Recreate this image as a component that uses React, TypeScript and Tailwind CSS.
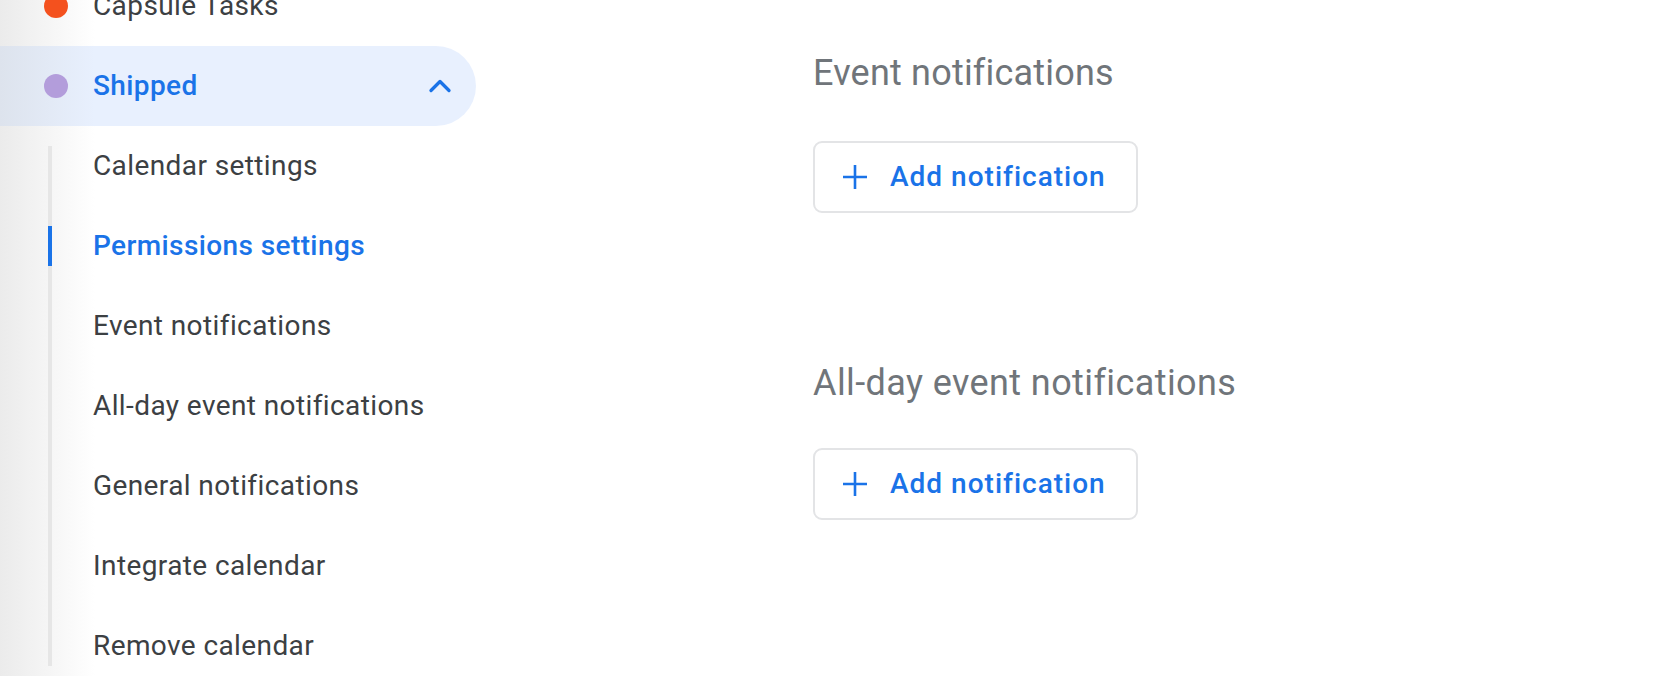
import { ChevronUp } from 'lucide-react';

const subItems = [
  'Calendar settings',
  'Permissions settings',
  'Event notifications',
  'All-day event notifications',
  'General notifications',
  'Integrate calendar',
  'Remove calendar',
];

function PlusIcon() {
  return (
    <svg className="h-6 w-6" viewBox="0 0 24 24" fill="none" stroke="currentColor" strokeWidth="2.6" aria-hidden="true">
      <path d="M12 0v24M0 12h24" />
    </svg>
  );
}

function AddButton() {
  return (
    <button className="flex h-[72px] w-[325px] items-center rounded-[9px] border-2 border-[#e3e4e6] bg-white pl-[28px] text-[28px] font-medium tracking-[1px] text-[#1a73e8]">
      <PlusIcon />
      <span className="ml-[23px]">Add notification</span>
    </button>
  );
}

export default function App() {
  return (
    <div className="flex h-[676px] w-[1672px] overflow-hidden bg-[linear-gradient(to_right,#ebebeb,#ffffff_95px)] font-['Roboto',sans-serif]">
      <aside className="-mt-[34px] w-[476px] shrink-0">
        <div className="flex h-20 items-center pl-11">
          <span className="h-6 w-6 rounded-full bg-[#f4511e]" />
          <span className="ml-[25px] text-[28px] tracking-[0.4px] text-[#3c4043]">Capsule Tasks</span>
        </div>
        <div className="flex h-20 items-center rounded-r-full bg-[linear-gradient(to_right,#dde3ed,#e8f0fe_95px)] pl-11 pr-[18px]">
          <span className="h-6 w-6 rounded-full bg-[#b39ddb]" />
          <span className="ml-[25px] flex-1 text-[28px] font-medium tracking-[0.4px] text-[#1a73e8]">Shipped</span>
          <ChevronUp className="h-9 w-9 text-[#1a73e8]" strokeWidth={2.2} />
        </div>
        <div className="my-5 ml-12 flow-root border-l-4 border-[#e6e6e6]">
          <ul className="-my-5">
            {subItems.map((item) => {
              const active = item === 'Permissions settings';
              return (
                <li key={item} className="-ml-1 flex h-20 items-center">
                  <span className={active ? 'h-10 w-1 bg-[#1a73e8]' : 'h-10 w-1'} />
                  <span
                    className={
                      active
                        ? 'ml-[41px] text-[28px] font-medium tracking-[0.4px] text-[#1a73e8]'
                        : 'ml-[41px] text-[28px] tracking-[0.4px] text-[#3c4043]'
                    }
                  >
                    {item}
                  </span>
                </li>
              );
            })}
          </ul>
        </div>
      </aside>

      <main className="ml-[337px] flex-1 bg-white pt-[51px]">
        <section className="h-[310px]">
          <h2 className="text-[36px] leading-[44px] tracking-[0.2px] text-[#70757a]">Event notifications</h2>
          <div className="mt-[46px]">
            <AddButton />
          </div>
        </section>
        <section className="h-[310px]">
          <h2 className="text-[36px] leading-[44px] tracking-[0.4px] text-[#70757a]">All-day event notifications</h2>
          <div className="mt-[43px]">
            <AddButton />
          </div>
        </section>
        <section className="pt-[5px]">
          <h2 className="text-[36px] leading-[44px] tracking-[0.4px] text-[#70757a]">General notifications</h2>
        </section>
      </main>
    </div>
  );
}
